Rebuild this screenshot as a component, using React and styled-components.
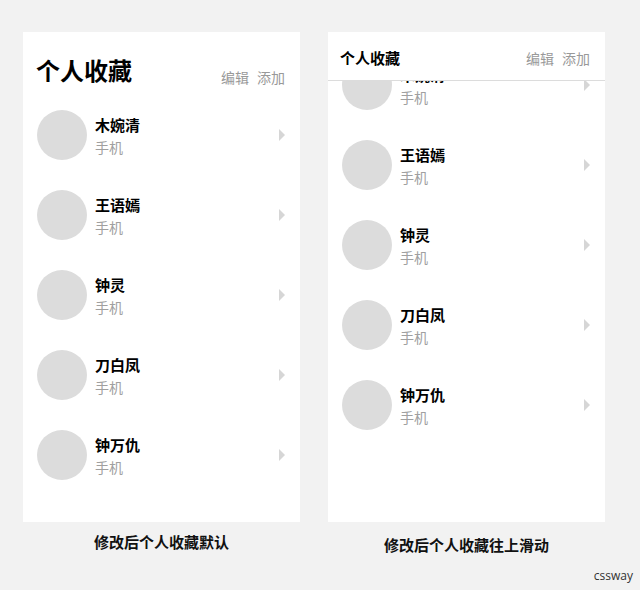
import React from "react";
import styled, { createGlobalStyle } from "styled-components";

const contacts = [
  { name: "木婉清", kind: "手机" },
  { name: "王语嫣", kind: "手机" },
  { name: "钟灵", kind: "手机" },
  { name: "刀白凤", kind: "手机" },
  { name: "钟万仇", kind: "手机" },
];

function ContactList() {
  return contacts.map((c) => (
    <Row key={c.name}>
      <Avatar />
      <Info>
        <Name>{c.name}</Name>
        <Kind>{c.kind}</Kind>
      </Info>
      <Arrow />
    </Row>
  ));
}

function Actions({ $top }) {
  return (
    <StActions $top={$top}>
      <span>编辑</span>
      <span>添加</span>
    </StActions>
  );
}

function App() {
  return (
    <>
      <GlobalStyle />
      <Page>
        <Panels>
          <Column>
            <Card>
              <BigHeader>
                <BigTitle>个人收藏</BigTitle>
                <Actions $top={13} />
              </BigHeader>
              <ContactList />
            </Card>
            <Caption $top={10}>修改后个人收藏默认</Caption>
          </Column>

          <Column>
            <Card>
              <SmallHeader>
                <SmallTitle>个人收藏</SmallTitle>
                <Actions />
              </SmallHeader>
              {/* list scrolled up under the header */}
              <ScrollArea>
                <ScrollInner $offset={36}>
                  <ContactList />
                </ScrollInner>
              </ScrollArea>
            </Card>
            <Caption $top={13}>修改后个人收藏往上滑动</Caption>
          </Column>
        </Panels>
        <Footer>cssway</Footer>
      </Page>
    </>
  );
}

const GlobalStyle = createGlobalStyle`
  body {
    margin: 0;
    background: #f2f2f2;
    font-family: "Noto Sans CJK SC", "Noto Sans", sans-serif;
    color: #111;
  }
`;

const Page = styled.div`
  width: 640px;
  height: 590px;
  box-sizing: border-box;
  padding-top: 32px;
  display: flex;
  flex-direction: column;
`;

const Panels = styled.div`
  display: flex;
  gap: 28px;
  padding-left: 23px;
`;

const Column = styled.div`
  display: flex;
  flex-direction: column;
  align-items: center;
  width: 277px;
`;

const Card = styled.div`
  width: 277px;
  height: 490px;
  background: #fff;
  display: flex;
  flex-direction: column;
  overflow: hidden;
`;

const BigHeader = styled.div`
  height: 63px;
  box-sizing: border-box;
  padding: 22px 15px 0 13px;
  display: flex;
  justify-content: space-between;
  align-items: flex-start;
  flex-shrink: 0;
`;

const BigTitle = styled.h1`
  margin: 0;
  font-size: 24px;
  line-height: 32px;
  font-weight: 700;
  color: #000;
`;

const SmallHeader = styled.div`
  height: 49px;
  box-sizing: border-box;
  padding: 3px 15px 0 12px;
  border-bottom: 1px solid #dcdcdc;
  display: flex;
  justify-content: space-between;
  align-items: center;
  flex-shrink: 0;
`;

const SmallTitle = styled.h2`
  margin: 0;
  font-size: 15px;
  line-height: 22px;
  font-weight: 700;
  color: #000;
`;

const StActions = styled.div`
  display: flex;
  gap: 8px;
  margin-top: ${(p) => p.$top || 0}px;
  font-size: 14px;
  line-height: 20px;
  color: #999;
`;

const ScrollArea = styled.div`
  flex: 1;
  overflow: hidden;
`;

const ScrollInner = styled.div`
  margin-top: ${(p) => -p.$offset}px;
`;

const Row = styled.div`
  height: 80px;
  box-sizing: border-box;
  padding: 0 15px 0 14px;
  display: flex;
  align-items: center;
`;

const Avatar = styled.div`
  width: 50px;
  height: 50px;
  border-radius: 50%;
  background: #dcdcdc;
  flex-shrink: 0;
`;

const Info = styled.div`
  flex: 1;
  margin-left: 8px;
  margin-top: 4px;
  display: flex;
  flex-direction: column;
`;

const Name = styled.span`
  font-size: 15px;
  line-height: 20px;
  font-weight: 700;
  color: #000;
`;

const Kind = styled.span`
  font-size: 14px;
  line-height: 24px;
  color: #a0a0a0;
`;

const Arrow = styled.i`
  width: 0;
  height: 0;
  border-left: 6px solid #d6d6d6;
  border-top: 6px solid transparent;
  border-bottom: 6px solid transparent;
`;

const Caption = styled.div`
  margin-top: ${(p) => p.$top}px;
  font-size: 15px;
  line-height: 20px;
  font-weight: 700;
  color: #111;
`;

const Footer = styled.div`
  margin-top: auto;
  margin-bottom: 6px;
  padding-right: 7px;
  text-align: right;
  font-family: "Open Sans", "Liberation Sans", sans-serif;
  font-size: 12px;
  line-height: 16px;
  color: #333;
`;

export default App;
